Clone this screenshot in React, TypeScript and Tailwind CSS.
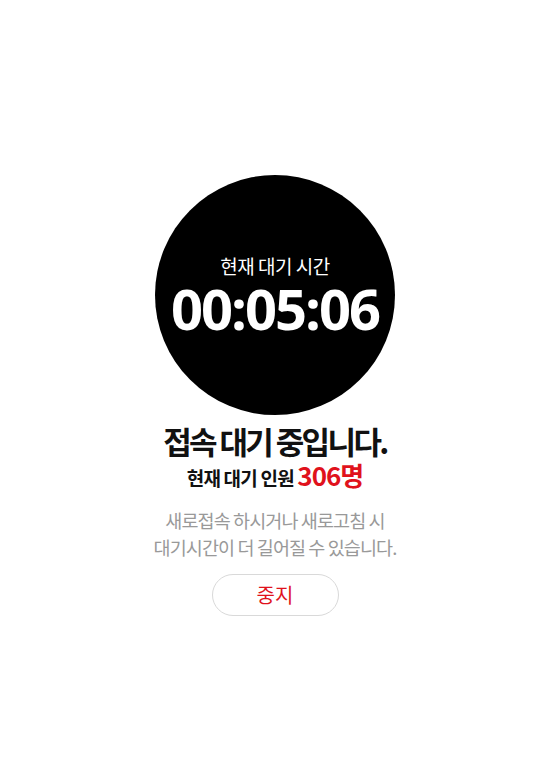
import React from "react";

// Waiting room / queue page
export default function App() {
  return (
    <div
      className="min-h-[784px] w-full bg-white flex flex-col items-center pt-[175px]"
      style={{ fontFamily: '"Noto Sans CJK KR", "Noto Sans", sans-serif' }}
    >
      {/* timer circle */}
      <div className="w-[240px] h-[240px] rounded-full bg-black flex flex-col items-center justify-center gap-[2px] pt-[2px]">
        <p className="text-white text-[19px] leading-[22px] tracking-[-0.5px]">현재 대기 시간</p>
        <p
          className="text-white font-bold text-[56px] leading-[58px] tracking-[-2px]"
          style={{ fontFamily: '"Open Sans", "Noto Sans", sans-serif' }}
        >
          00:05:06
        </p>
      </div>

      <h1 className="mt-[6px] text-[31px] leading-[40px] font-bold text-[#111] tracking-[-2.6px]">
        접속 대기 중입니다.
      </h1>
      <p className="h-[28px] text-[19px] leading-[28px] font-bold text-[#111] tracking-[-0.8px] flex items-baseline">
        현재 대기 인원&nbsp;
        <span className="text-[#e0121c] text-[26px] leading-[28px] tracking-[-1px]">306명</span>
      </p>

      <p className="mt-[18px] text-center text-[18.5px] leading-[27px] text-[#999] tracking-[-0.9px]">
        새로접속 하시거나 새로고침 시
        <br />
        대기시간이 더 길어질 수 있습니다.
      </p>

      <button className="mt-[13px] w-[127px] h-[42px] rounded-full border border-[#d9d9d9] bg-white text-[#e0121c] text-[20px] leading-none">
        중지
      </button>
    </div>
  );
}
